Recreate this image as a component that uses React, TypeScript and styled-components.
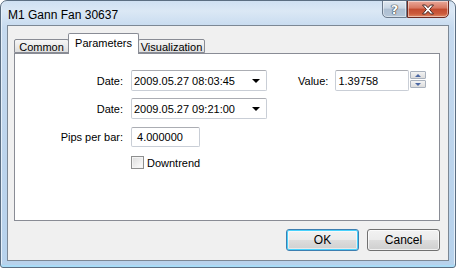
import styled, { createGlobalStyle } from "styled-components";

const GlobalStyle = createGlobalStyle`
  html, body {
    margin: 0;
    padding: 0;
    background: #ffffff;
  }
  * {
    box-sizing: border-box;
  }
`;

const Window = styled.div`
  width: 456px;
  height: 268px;
  display: flex;
  flex-direction: column;
  border: 1px solid #5b6e82;
  border-radius: 7px 7px 3px 3px;
  background: linear-gradient(
    to bottom,
    #cfe0f2 0px,
    #dbe8f5 10px,
    #c6daef 27px,
    #bcd4ec 60%,
    #b7d2ec 100%
  );
  box-shadow: inset 0 -2px 0 #a9dcf7, inset 1px 0 0 #e6f0fa, inset -1px 0 0 #e6f0fa;
  font-family: "Liberation Sans", Arial, sans-serif;
  font-size: 11px;
  color: #000;
  overflow: hidden;
`;

const TitleBar = styled.div`
  height: 26px;
  display: flex;
  align-items: flex-start;
  padding-left: 7px;
`;

const Title = styled.div`
  font-size: 12px;
  line-height: 12px;
  margin-top: 8px;
  color: #000;
`;

const CaptionButtons = styled.div`
  margin-left: auto;
  margin-right: 6px;
  display: flex;
  margin-top: -1px;
`;

const CaptionButton = styled.div<{ $close?: boolean }>`
  width: ${(p) => (p.$close ? "42px" : "25px")};
  height: 18px;
  display: flex;
  align-items: center;
  justify-content: center;
  border: 1px solid ${(p) => (p.$close ? "#6d2a22" : "#6b7a8c")};
  border-radius: ${(p) => (p.$close ? "0 0 5px 0" : "0 0 0 5px")};
  background: ${(p) =>
    p.$close
      ? "linear-gradient(to bottom, #e9a99b 0%, #d7765f 45%, #c24a2f 50%, #cc5b3c 80%, #e08a66 100%)"
      : "linear-gradient(to bottom, #e0e8f1 0%, #c9d6e4 45%, #aebfd2 50%, #b5c6d8 100%)"};
  box-shadow: inset 0 0 0 1px rgba(255, 255, 255, 0.45);
  font-family: "DejaVu Sans", sans-serif;
  font-weight: bold;
  font-size: 13px;
  color: #fff;
  text-shadow: 0 0 1px #333, 0 0 1px #333, 0 0 1px #333;
`;

const Client = styled.div`
  flex: 1;
  margin: 0 6px 6px 6px;
  border: 1px solid #7c8895;
  background: #f0f0f0;
  display: flex;
  flex-direction: column;
  padding: 7px 8px 9px 6px;
`;

const TabStrip = styled.div`
  height: 20px;
  display: flex;
  align-items: flex-end;
  position: relative;
  z-index: 1;
`;

const Tab = styled.div<{ $active?: boolean; $width: number }>`
  width: ${(p) => p.$width}px;
  height: ${(p) => (p.$active ? "21px" : "14px")};
  margin-bottom: ${(p) => (p.$active ? "-1px" : "0")};
  margin-left: ${(p) => (p.$active ? "-1px" : "0")};
  margin-right: ${(p) => (p.$active ? "-1px" : "0")};
  display: flex;
  justify-content: center;
  align-items: flex-start;
  border: 1px solid #898c95;
  border-bottom: ${(p) => (p.$active ? "none" : "1px solid #898c95")};
  border-radius: 2px 2px 0 0;
  background: ${(p) =>
    p.$active
      ? "#ffffff"
      : "linear-gradient(to bottom, #f6f6f6 0%, #ebebeb 50%, #dedede 100%)"};
  font-size: 11px;
  line-height: 13px;
  padding-top: ${(p) => (p.$active ? "3px" : "1px")};
  white-space: nowrap;
  position: relative;
  z-index: ${(p) => (p.$active ? 2 : 1)};
`;

const Panel = styled.div`
  height: 168px;
  background: #ffffff;
  border: 1px solid #898c95;
  padding: 16px 0 0 0;
  display: flex;
  flex-direction: column;
  gap: 7px;
`;

const Row = styled.div`
  display: flex;
  align-items: center;
  height: 21px;
`;

const Label = styled.div`
  width: 108px;
  text-align: right;
  margin-right: 8px;
  white-space: nowrap;
`;

const Field = styled.div<{ $width: number; $height?: number }>`
  width: ${(p) => p.$width}px;
  height: ${(p) => p.$height ?? 21}px;
  border: 1px solid #c9ced6;
  border-top-color: #abadb3;
  border-radius: 2px;
  background: #fff;
  display: flex;
  align-items: center;
  padding: 0 6px 0 2px;
  white-space: nowrap;
`;

const ComboText = styled.span`
  flex: 1;
`;

const Arrow = styled.span`
  width: 0;
  height: 0;
  border-left: 4px solid transparent;
  border-right: 4px solid transparent;
  border-top: 4px solid #000;
`;

const ValueLabel = styled.div`
  margin-left: 31px;
  margin-right: 7px;
`;

const Spinner = styled.div`
  display: flex;
  flex-direction: column;
  gap: 1px;
  margin-left: 1px;
  margin-top: -2px;
`;

const SpinButton = styled.div<{ $down?: boolean }>`
  width: 16px;
  height: 8px;
  border: 1px solid #a9b1bd;
  border-radius: 1px;
  background: linear-gradient(to bottom, #f3f3f3, #dcdcdc);
  display: flex;
  align-items: center;
  justify-content: center;
  &::after {
    content: "";
    width: 0;
    height: 0;
    border-left: 3px solid transparent;
    border-right: 3px solid transparent;
    ${(p) =>
      p.$down ? "border-top: 3px solid #4c68a4;" : "border-bottom: 3px solid #4c68a4;"}
  }
`;

const CheckRow = styled.label`
  display: flex;
  align-items: center;
  margin-left: 116px;
  margin-top: 2px;
  gap: 3px;
`;

const CheckBox = styled.span`
  width: 13px;
  height: 13px;
  border: 1px solid #8e8f8f;
  background: linear-gradient(135deg, #dcdcdc 0%, #f4f4f4 70%, #ffffff 100%);
  box-shadow: inset 0 0 0 1px #f4f4f4;
`;

const ButtonRow = styled.div`
  display: flex;
  justify-content: flex-end;
  gap: 8px;
  margin-top: 8px;
`;

const Button = styled.div<{ $default?: boolean }>`
  width: 73px;
  height: 22px;
  display: flex;
  align-items: center;
  justify-content: center;
  border: 1px solid ${(p) => (p.$default ? "#3c7fb1" : "#707070")};
  border-radius: 3px;
  background: linear-gradient(to bottom, #f2f2f2 0%, #ebebeb 49%, #dddddd 50%, #cfcfcf 100%);
  box-shadow: ${(p) =>
    p.$default
      ? "inset 0 0 0 1px #48d1fc, inset 0 0 0 2px rgba(255, 255, 255, 0.5)"
      : "inset 0 0 0 1px rgba(255, 255, 255, 0.7)"};
  font-size: 12px;
`;

function CloseGlyph() {
  return (
    <svg width="14" height="11" viewBox="0 0 14 11">
      <path
        d="M1.5 1 L4.5 1 L7 3.7 L9.5 1 L12.5 1 L8.6 5.5 L12.5 10 L9.5 10 L7 7.3 L4.5 10 L1.5 10 L5.4 5.5 Z"
        fill="#fff"
        stroke="#4a2a26"
        strokeWidth="1"
        strokeLinejoin="round"
      />
    </svg>
  );
}

export default function App() {
  return (
    <>
      <GlobalStyle />
      <Window>
        <TitleBar>
          <Title>M1 Gann Fan 30637</Title>
          <CaptionButtons>
            <CaptionButton>?</CaptionButton>
            <CaptionButton $close>
              <CloseGlyph />
            </CaptionButton>
          </CaptionButtons>
        </TitleBar>
        <Client>
          <TabStrip>
            <Tab $width={55}>Common</Tab>
            <Tab $width={71} $active>
              Parameters
            </Tab>
            <Tab $width={67}>Visualization</Tab>
          </TabStrip>
          <Panel>
            <Row>
              <Label>Date:</Label>
              <Field $width={136}>
                <ComboText>2009.05.27 08:03:45</ComboText>
                <Arrow />
              </Field>
              <ValueLabel>Value:</ValueLabel>
              <Field $width={74}>1.39758</Field>
              <Spinner>
                <SpinButton />
                <SpinButton $down />
              </Spinner>
            </Row>
            <Row>
              <Label>Date:</Label>
              <Field $width={136}>
                <ComboText>2009.05.27 09:21:00</ComboText>
                <Arrow />
              </Field>
            </Row>
            <Row>
              <Label>Pips per bar:</Label>
              <Field $width={69} $height={20}>
                &nbsp;4.000000
              </Field>
            </Row>
            <CheckRow>
              <CheckBox />
              Downtrend
            </CheckRow>
          </Panel>
          <ButtonRow>
            <Button $default>OK</Button>
            <Button>Cancel</Button>
          </ButtonRow>
        </Client>
      </Window>
    </>
  );
}
